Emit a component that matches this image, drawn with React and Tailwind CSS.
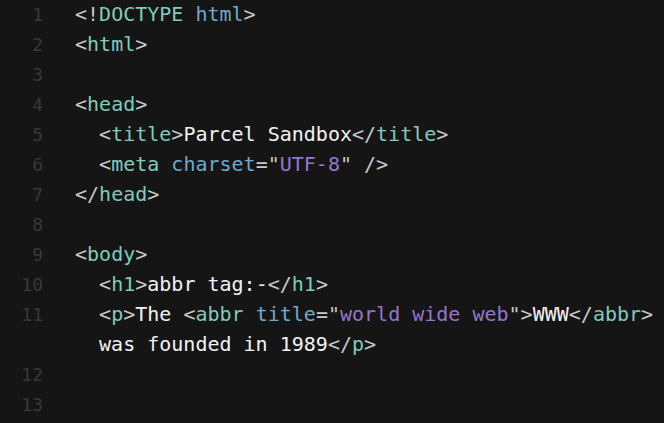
import React from "react";

const c = {
  p: "text-[#c9c9c9]",
  t: "text-[#80cbb9]",
  a: "text-[#71a9c9]",
  s: "text-[#9575cd]",
  x: "text-[#f2f2f2]",
};

const lines = [
  { n: 1, code: [["p", "<!"], ["t", "DOCTYPE"], ["x", " "], ["a", "html"], ["p", ">"]] },
  { n: 2, code: [["p", "<"], ["t", "html"], ["p", ">"]] },
  { n: 3, code: [] },
  { n: 4, code: [["p", "<"], ["t", "head"], ["p", ">"]] },
  { n: 5, code: [["x", "  "], ["p", "<"], ["t", "title"], ["p", ">"], ["x", "Parcel Sandbox"], ["p", "</"], ["t", "title"], ["p", ">"]] },
  { n: 6, code: [["x", "  "], ["p", "<"], ["t", "meta"], ["x", " "], ["a", "charset"], ["p", "=\""], ["s", "UTF-8"], ["p", "\" />"]] },
  { n: 7, code: [["p", "</"], ["t", "head"], ["p", ">"]] },
  { n: 8, code: [] },
  { n: 9, code: [["p", "<"], ["t", "body"], ["p", ">"]] },
  { n: 10, code: [["x", "  "], ["p", "<"], ["t", "h1"], ["p", ">"], ["x", "abbr tag:-"], ["p", "</"], ["t", "h1"], ["p", ">"]] },
  { n: 11, code: [["x", "  "], ["p", "<"], ["t", "p"], ["p", ">"], ["x", "The "], ["p", "<"], ["t", "abbr"], ["x", " "], ["a", "title"], ["p", "=\""], ["s", "world wide web"], ["p", "\">"], ["x", "WWW"], ["p", "</"], ["t", "abbr"], ["p", ">"]] },
  { n: null, code: [["x", "  was founded in 1989"], ["p", "</"], ["t", "p"], ["p", ">"]] },
  { n: 12, code: [] },
  { n: 13, code: [] },
];

export default function App() {
  return (
    <div className="w-[664px] h-[423px] overflow-hidden bg-[#151515] font-['DejaVu_Sans_Mono',monospace]">
      <div className="-mt-[1px]">
        {lines.map((line, i) => (
          <div key={i} className="flex h-[30px] items-center">
            <div className="w-[43px] shrink-0 text-right text-[18px] text-[#383838]">{line.n}</div>
            <div className="ml-[32px] whitespace-pre text-[20px]">
              {line.code.map(([k, s], j) => (
                <span key={j} className={c[k]}>{s}</span>
              ))}
            </div>
          </div>
        ))}
      </div>
    </div>
  );
}
